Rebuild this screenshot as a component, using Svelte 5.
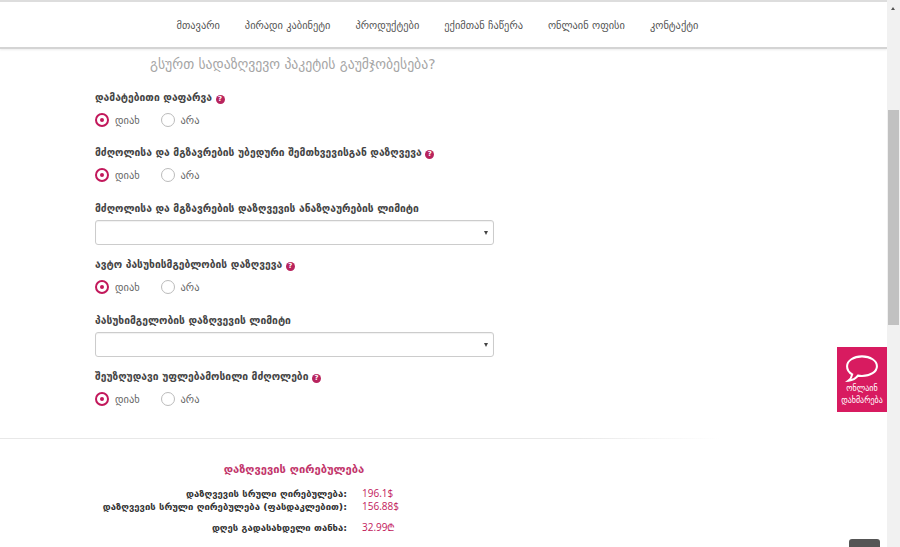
<script>
  const menu = ["მთავარი", "პირადი კაბინეტი", "პროდუქტები", "ექიმთან ჩაწერა", "ონლაინ ოფისი", "კონტაქტი"];
  const fields = [
    { label: "დამატებითი დაფარვა", help: true, type: "radio" },
    { label: "მძღოლისა და მგზავრების უბედური შემთხვევისგან დაზღვევა", help: true, type: "radio" },
    { label: "მძღოლისა და მგზავრების დაზღვევის ანაზღაურების ლიმიტი", type: "select" },
    { label: "ავტო პასუხისმგებლობის დაზღვევა", help: true, type: "radio" },
    { label: "პასუხიმგელობის დაზღვევის ლიმიტი", type: "select" },
    { label: "შეუზღუდავი უფლებამოსილი მძღოლები", help: true, type: "radio" }
  ];
  const costs = [
    { label: "დაზღვევის სრული ღირებულება:", value: "196.1$" },
    { label: "დაზღვევის სრული ღირებულება (ფასდაკლებით):", value: "156.88$" },
    { label: "დღეს გადასახდელი თანხა:", value: "32.99₾", gap: true }
  ];
</script>

<div class="window">
  <div class="page">
    <nav>
      {#each menu as item}
        <span>{item}</span>
      {/each}
    </nav>

    <h2>გსურთ სადაზღვევო პაკეტის გაუმჯობესება?</h2>

    <form>
      {#each fields as field}
        <div class="field" class:has-select={field.type === "select"}>
          <div class="label">
            {field.label}
            {#if field.help}<i class="help">?</i>{/if}
          </div>
          {#if field.type === "radio"}
            <div class="radios">
              <span class="radio on"><b></b>დიახ</span>
              <span class="radio"><b></b>არა</span>
            </div>
          {:else}
            <div class="select"><em></em></div>
          {/if}
        </div>
      {/each}
    </form>

    <hr />

    <section>
      <h3>დაზღვევის ღირებულება</h3>
      {#each costs as row}
        <div class="cost" class:gap={row.gap}>
          <strong>{row.label}</strong>
          <span>{row.value}</span>
        </div>
      {/each}
    </section>
  </div>

  <div class="scrollbar">
    <div class="arrow"></div>
    <div class="thumb"></div>
  </div>

  <div class="chat">
    <svg width="34" height="28" viewBox="0 0 36 30" fill="none" stroke="#fff" stroke-width="2.2">
      <path d="M18 1.500c9 0 16 4.600 16 10.500s-7 10.500-16 10.500c-1.500 0-3-.1-4.400-.4C11.500 25 8 27 3.500 27.500c2-1.500 3.500-4 4-6.800C3.800 18.700 2 15.500 2 12 2 6.100 9 1.500 18 1.500z" />
    </svg>
    <span>ონლაინ<br />დახმარება</span>
  </div>
  <div class="totop"></div>
</div>

<style>
  :global(body) {
    margin: 0;
    background: #fff;
  }
  .window {
    display: flex;
    width: 900px;
    height: 547px;
    overflow: hidden;
    position: relative;
    font-family: "DejaVu Sans", "Noto Sans", sans-serif;
  }
  .page {
    flex: 1;
    min-width: 0;
  }
  nav {
    height: 44px;
    border-top: 2px solid #ddd;
    border-bottom: 2px solid #d4d4d4;
    box-shadow: 0 1px 2px rgba(0, 0, 0, 0.08);
    display: flex;
    justify-content: center;
    align-items: center;
    gap: 25px;
    font-size: 10.4px;
    color: #555;
    padding: 1px 12px 0 0;
  }
  h2 {
    margin: 6px 0 0 150px;
    font-size: 13.7px;
    line-height: 18px;
    font-weight: 400;
    color: #a5a5a5;
  }
  form {
    margin: 17px 0 0 95px;
    width: 399px;
  }
  .field {
    height: 55px;
  }
  .field.has-select {
    height: 57px;
  }
  .label {
    font-size: 10.3px;
    line-height: 14px;
    font-weight: 700;
    color: #444;
    white-space: nowrap;
  }
  .has-select .label {
    padding-top: 1px;
  }
  .help {
    display: inline-block;
    width: 9px;
    height: 9px;
    border-radius: 50%;
    background: #b8245e;
    color: #fff;
    font-size: 7px;
    line-height: 9px;
    font-weight: 700;
    font-style: normal;
    text-align: center;
  }
  .radios {
    display: flex;
    gap: 21px;
    margin-top: 8px;
  }
  .radio {
    display: flex;
    align-items: center;
    gap: 6px;
    font-size: 10.4px;
    line-height: 16px;
    color: #666;
  }
  .radio b {
    width: 14px;
    height: 14px;
    box-sizing: border-box;
    border: 1px solid #bbb;
    border-radius: 50%;
    background: #fff;
    display: flex;
    align-items: center;
    justify-content: center;
  }
  .radio.on b {
    border: 2px solid #c2185b;
  }
  .radio.on b::after {
    content: "";
    width: 4px;
    height: 4px;
    border-radius: 50%;
    background: #c2185b;
  }
  .select {
    height: 25px;
    box-sizing: border-box;
    margin-top: 5px;
    border: 1px solid #ccc;
    border-radius: 3px;
    box-shadow: inset 0 1px 1px rgba(0, 0, 0, 0.06);
    display: flex;
    align-items: center;
    justify-content: flex-end;
    padding-right: 5px;
  }
  .select em {
    border-left: 2px solid transparent;
    border-right: 2px solid transparent;
    border-top: 4px solid #444;
  }
  hr {
    border: 0;
    height: 1px;
    background: linear-gradient(to right, #e8e8e8 80%, #fff);
    margin: 14px 0 0;
    width: 720px;
  }
  h3 {
    margin: 24px 0 0;
    width: 588px;
    text-align: center;
    font-size: 11.2px;
    line-height: 14px;
    font-weight: 700;
    color: #c2356b;
  }
  .cost {
    display: flex;
    gap: 15px;
    font-size: 9.5px;
    line-height: 13px;
  }
  h3 + .cost {
    margin-top: 10px;
  }
  .cost.gap {
    margin-top: 8px;
  }
  .cost strong {
    width: 347px;
    text-align: right;
    color: #333;
    white-space: nowrap;
  }
  .cost span {
    font-family: "Open Sans", "DejaVu Sans", sans-serif;
    font-size: 10px;
    color: #c2185b;
  }
  .scrollbar {
    width: 13px;
    background: #f1f1f1;
    position: relative;
  }
  .arrow {
    position: absolute;
    top: 7px;
    left: 4px;
    border-left: 2px solid transparent;
    border-right: 2px solid transparent;
    border-bottom: 3px solid #555;
  }
  .thumb {
    position: absolute;
    top: 110px;
    left: 1px;
    width: 11px;
    height: 215px;
    background: #c1c1c1;
  }
  .chat {
    position: absolute;
    left: 837px;
    top: 347px;
    width: 50px;
    height: 65px;
    background: #d81b60;
    color: #fff;
    display: flex;
    flex-direction: column;
    align-items: center;
    font-size: 8px;
    line-height: 12px;
    text-align: center;
  }
  .chat svg {
    margin-top: 8px;
    flex: none;
  }
  .totop {
    position: absolute;
    left: 849px;
    top: 539px;
    width: 31px;
    height: 8px;
    background: #555;
    border-radius: 3px 3px 0 0;
  }
</style>
